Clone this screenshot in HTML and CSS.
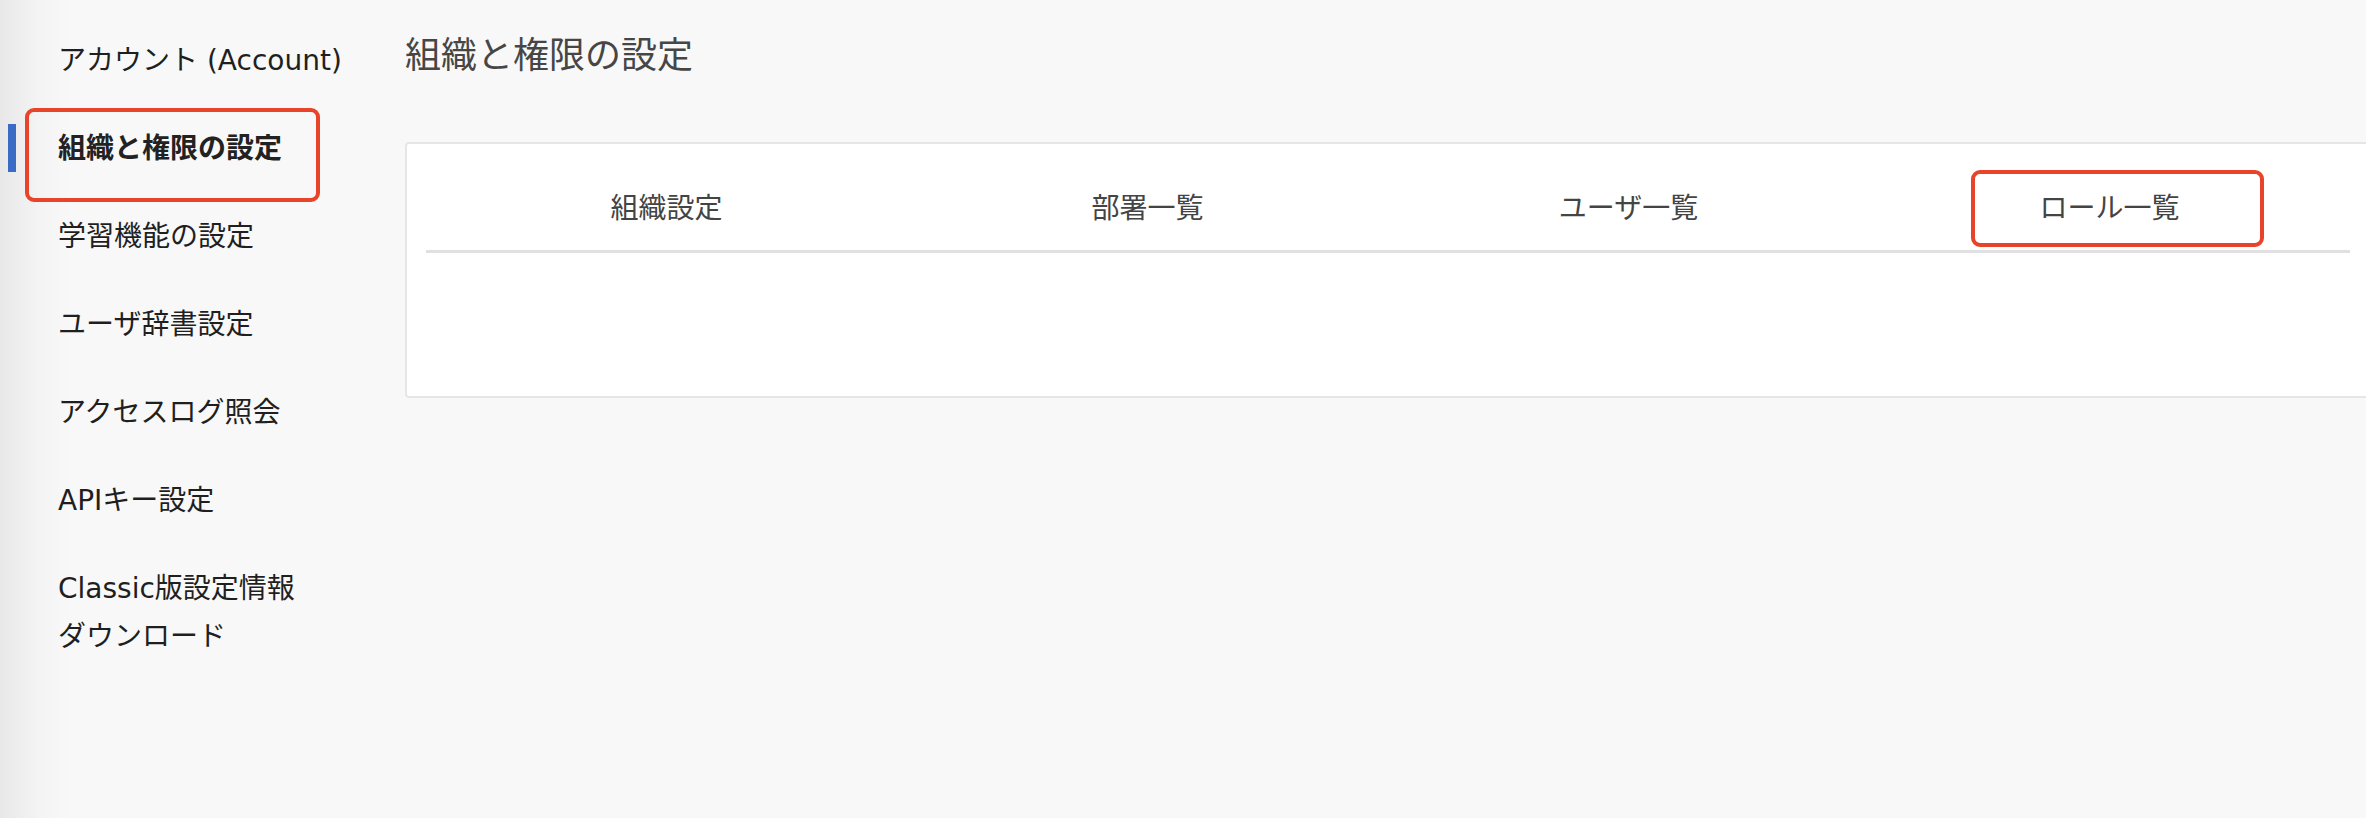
FILE: index.html
```html
<!DOCTYPE html>
<html lang="ja">
  <head>
    <meta charset="UTF-8" />
    <meta name="viewport" content="width=device-width, initial-scale=1.0" />
    <title>組織と権限の設定</title>
    <link rel="stylesheet" href="styles.css">
  </head>
  <body>
    <div class="page">
      <nav class="side-nav">
        <ul class="side-menu">
          <li class="side-item">アカウント (Account)</li>
          <li class="side-item active">
            組織と権限の設定
            <span class="mark mark-side"></span>
          </li>
          <li class="side-item">学習機能の設定</li>
          <li class="side-item">ユーザ辞書設定</li>
          <li class="side-item">アクセスログ照会</li>
          <li class="side-item">APIキー設定</li>
          <li class="side-item">Classic版設定情報<br />ダウンロード</li>
        </ul>
      </nav>
      <div class="main-body">
        <h1 class="main-title">組織と権限の設定</h1>
        <div class="panel">
          <ul class="tab-list">
            <li class="tab">組織設定</li>
            <li class="tab">部署一覧</li>
            <li class="tab">ユーザ一覧</li>
            <li class="tab">
              ロール一覧
              <span class="mark mark-tab"></span>
            </li>
          </ul>
          <div class="tab-body"></div>
        </div>
      </div>
    </div>
  </body>
</html>
```

FILE: styles.css
```css
html,
body {
  margin: 0;
  padding: 0;
}
body {
  width: 2366px;
  height: 818px;
  overflow: hidden;
  background-color: #f8f8f8;
  font-family: "DejaVu Sans", "Noto Sans CJK JP", sans-serif;
}
ul {
  list-style: none;
  margin: 0;
  padding: 0;
}
.page {
  display: flex;
  height: 100%;
}
.side-nav {
  flex: 0 0 405px;
  height: 100%;
  background: linear-gradient(to right, #e8e8e8 0, #f4f4f4 40px, #f8f8f8 70px);
}
.side-menu {
  padding-top: 17px;
}
.side-item {
  position: relative;
  padding: 20px 0 20px 58px;
  font-size: 28px;
  line-height: 48px;
  color: #1f1f1f;
  white-space: nowrap;
}
.side-item.active {
  font-weight: 700;
  color: #222;
}
.side-item.active::before {
  content: "";
  position: absolute;
  left: 8px;
  top: 19px;
  width: 8px;
  height: 48px;
  background-color: #3a6cc6;
}
/* red annotation frames */
.mark {
  position: absolute;
  box-sizing: border-box;
  border: 4px solid #e8442a;
  border-radius: 9px;
  pointer-events: none;
}
.mark-side {
  left: 25px;
  top: 3px;
  width: 295px;
  height: 94px;
}
.mark-tab {
  left: 102px;
  top: 0;
  width: 293px;
  height: 77px;
}
.main-body {
  flex: 0 0 auto;
}
.main-title {
  margin: 32px 0 62px;
  font-size: 36px;
  line-height: 48px;
  font-weight: 400;
  color: #464646;
}
.panel {
  width: 1966px;
  box-sizing: border-box;
  height: 256px;
  padding: 26px 19px 0;
  background-color: #fff;
  border: 2px solid #e6e6e6;
  border-radius: 4px;
}
.tab-list {
  display: flex;
  border-bottom: 3px solid #e0e0e0;
}
.tab {
  position: relative;
  flex: 1;
  text-align: center;
  padding: 19px 0 21px;
  font-size: 28px;
  line-height: 40px;
  color: #444;
}
```
